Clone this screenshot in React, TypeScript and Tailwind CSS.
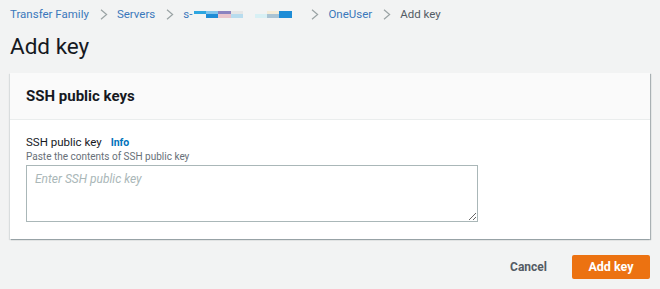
function Crumb({ children }: { children: React.ReactNode }) {
  return <span className="text-[#3b78bb]">{children}</span>;
}

function Sep() {
  return (
    <svg className="w-[8px] h-[11px] ml-[11px] mr-[9px] text-[#9aa3a4]" viewBox="0 0 8 11" fill="none">
      <path d="M1 0.8 L6.6 5.5 L1 10.2" stroke="currentColor" strokeWidth="1.2" />
    </svg>
  );
}

function Redacted() {
  return (
    <span className="flex items-center ml-[2px]">
      <span className="flex flex-col w-[49px] h-[7px]">
        <span className="flex h-[3px]">
          <span className="w-[12px] bg-[#2ea6e0]" />
          <span className="w-[12px] bg-[#80c4ec]" />
          <span className="w-[13px] bg-[#8b82c0]" />
          <span className="w-[12px] bg-[#e6e6e6]" />
        </span>
        <span className="flex h-[4px]">
          <span className="w-[12px]" />
          <span className="w-[12px] bg-[#1e8cd6]" />
          <span className="w-[13px] bg-[#eac4cc]" />
          <span className="w-[12px] bg-[#b8dcee]" />
        </span>
      </span>
      <span className="flex flex-col w-[37px] h-[7px] ml-[12px]">
        <span className="flex h-[3px]">
          <span className="w-[12px]" />
          <span className="w-[12px] bg-[#f4ecd8]" />
          <span className="w-[13px] bg-[#1e8cd6]" />
        </span>
        <span className="flex h-[4px]">
          <span className="w-[12px] bg-[#d8f0f4]" />
          <span className="w-[12px] bg-[#aac4d4]" />
          <span className="w-[13px] bg-[#1e8cd6]" />
        </span>
      </span>
    </span>
  );
}

export default function App() {
  return (
    <div
      className="w-[660px] h-[289px] bg-[#f2f3f3] overflow-hidden text-[#16191f]"
      style={{ fontFamily: "Roboto, 'Open Sans', Arial, sans-serif" }}
    >
      <div className="flex items-center pl-[10px] pt-[7px] h-[22px] text-[11.5px]">
        <Crumb>Transfer Family</Crumb>
        <Sep />
        <Crumb>Servers</Crumb>
        <Sep />
        <span className="text-[#3b78bb]">s-</span>
        <Redacted />
        <span className="w-[8px]" />
        <Sep />
        <Crumb>OneUser</Crumb>
        <Sep />
        <span className="text-[#545b64]">Add key</span>
      </div>

      <h1 className="pl-[10px] mt-[10px] text-[22.5px] leading-[28px] text-[#16191f]">Add key</h1>

      <div className="mx-[10px] mt-[13px] bg-white shadow-[1px_1px_1px_0_rgba(0,28,36,0.3),-1px_1px_1px_0_rgba(0,28,36,0.1)]">
        <div className="h-[47px] flex items-center px-[16px] bg-[#fafafa] border-b border-[#eaeded]">
          <h2 className="text-[15px] font-bold text-[#16191f]">SSH public keys</h2>
        </div>
        <div className="px-[16px] pt-[15px] pb-[17px]">
          <div className="flex items-baseline gap-[9px] text-[11.5px] leading-[15px] text-[#16191f]">
            <span>SSH public key</span>
            <span className="text-[10.5px] font-bold text-[#0073bb]">Info</span>
          </div>
          <div className="text-[10px] leading-[14px] text-[#687078]">Paste the contents of SSH public key</div>
          <textarea
            className="mt-[1px] block w-[452px] h-[57px] border border-[#aab7b8] px-[8px] py-[4px] text-[12px] italic placeholder:text-[#aab7b8] outline-none"
            placeholder="Enter SSH public key"
          />
        </div>
      </div>

      <div className="flex justify-end items-center mt-[16px] pr-[10px] gap-[25px]">
        <button className="text-[12px] font-bold text-[#545b64]">Cancel</button>
        <button className="w-[78px] h-[24px] bg-[#ec7211] text-white text-[12.5px] font-bold rounded-[2px]">Add key</button>
      </div>
    </div>
  );
}
